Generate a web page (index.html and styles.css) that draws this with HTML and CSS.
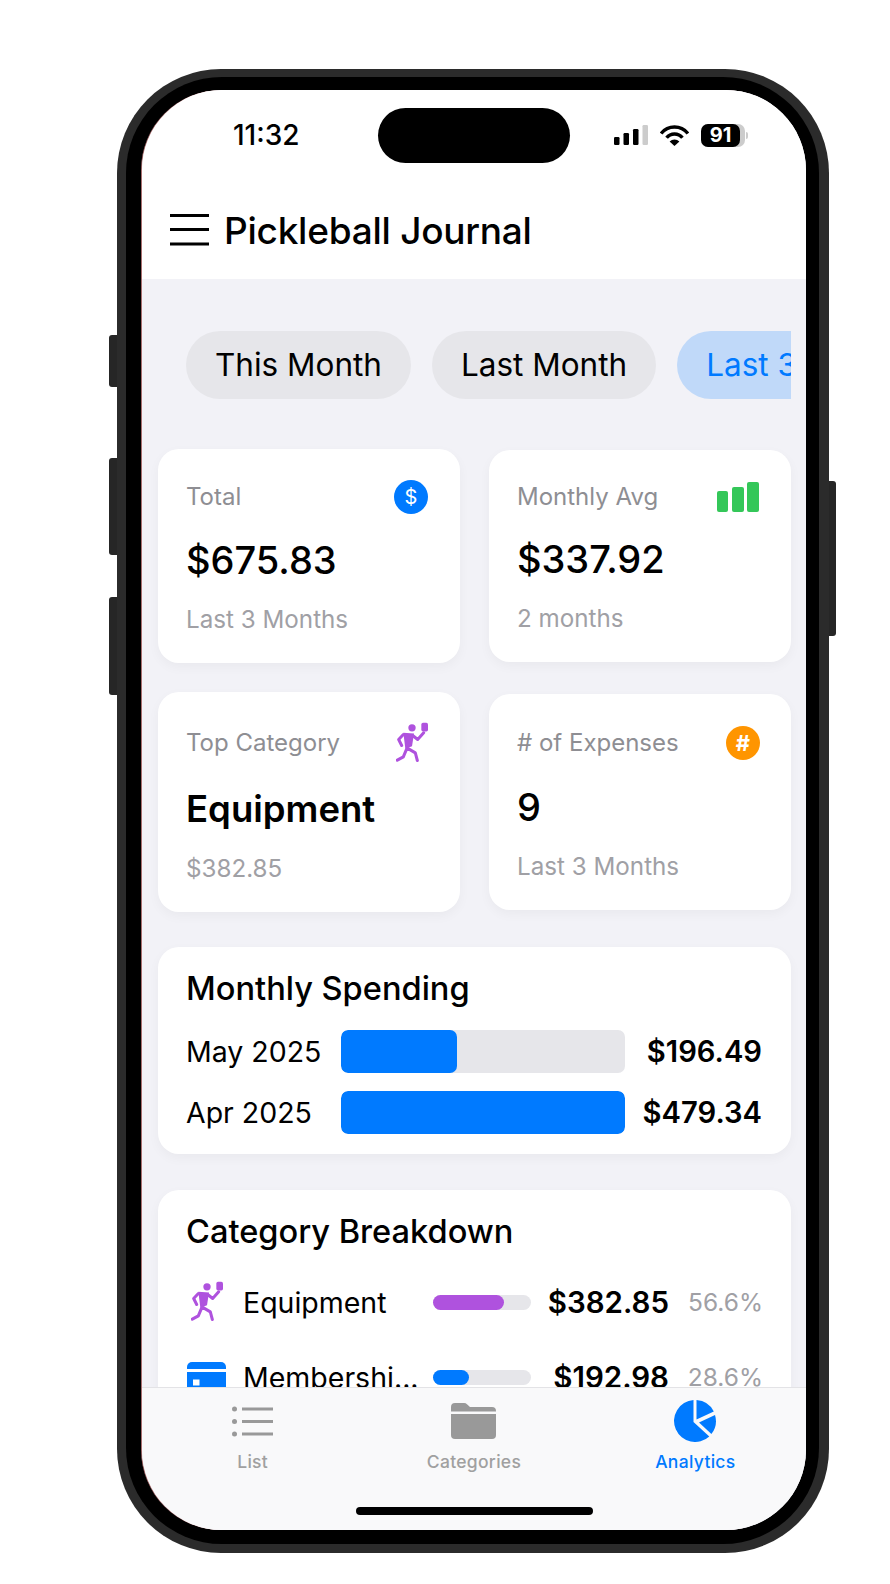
FILE: index.html
```html
<!DOCTYPE html>
<html lang="en">
<head>
  <meta charset="UTF-8">
  <meta name="viewport" content="width=device-width, initial-scale=1.0">
  <title>Pickleball Journal</title>
  <link rel="stylesheet" href="styles.css">
</head>
<body>

  <div id="phone">
    <span class="side-btn side-btn-mute"></span>
    <span class="side-btn side-btn-up"></span>
    <span class="side-btn side-btn-down"></span>
    <span class="side-btn side-btn-power"></span>

    <div id="bezel">
      <div id="screen">
        <div id="island"></div>

        <header id="top">
          <div id="status-bar">
            <span class="time">11:32</span>
            <div class="status-icons">
              <svg width="34" height="20" viewBox="0 0 34 20">
                <rect x="0" y="12" width="5.5" height="8" rx="1.2" fill="#000"/>
                <rect x="9.5" y="8" width="5.5" height="12" rx="1.2" fill="#000"/>
                <rect x="19" y="4" width="5.5" height="16" rx="1.2" fill="#000"/>
                <rect x="28.5" y="0" width="5.5" height="20" rx="1.2" fill="#ccc"/>
              </svg>
              <svg width="29" height="22" viewBox="0 0 29 22">
                <path d="M1.1 9.5A17 17 0 0 1 27.9 9.5" fill="none" stroke="#000" stroke-width="3.4"/>
                <path d="M6.6 13.8A10 10 0 0 1 22.4 13.8" fill="none" stroke="#000" stroke-width="3.4"/>
                <path d="M14.5 22L9.6 17.4A7 7 0 0 1 19.4 17.4Z" fill="#000"/>
              </svg>
              <div class="battery">
                <span class="battery-fill">91</span>
              </div>
            </div>
          </div>
          <div id="title-row">
            <svg width="39" height="32" viewBox="0 0 39 32">
              <path d="M0 1.5H39M0 15.5H39M0 30H39" stroke="#000" stroke-width="3"/>
            </svg>
            <h1>Pickleball Journal</h1>
          </div>
        </header>

        <main id="content">
          <div class="pills">
            <span class="pill">This Month</span>
            <span class="pill">Last Month</span>
            <span class="pill pill-active">Last 3 Months</span>
          </div>

          <div class="stats">
            <div class="card">
              <div class="card-head">
                <span class="card-label">Total</span>
                <span class="coin coin-blue">$</span>
              </div>
              <div class="card-value">$675.83</div>
              <div class="card-sub">Last 3 Months</div>
            </div>
            <div class="card">
              <div class="card-head card-head-bars">
                <span class="card-label">Monthly Avg</span>
                <svg class="bars-icon" width="42" height="30" viewBox="0 0 42 30">
                  <rect x="0" y="9" width="11" height="21" rx="2" fill="#34c759"/>
                  <rect x="15" y="5" width="12" height="25" rx="2" fill="#34c759"/>
                  <rect x="30" y="0" width="12" height="30" rx="2" fill="#34c759"/>
                </svg>
              </div>
              <div class="card-value">$337.92</div>
              <div class="card-sub">2 months</div>
            </div>
            <div class="card">
              <div class="card-head">
                <span class="card-label">Top Category</span>
                <svg class="runner" viewBox="30 20 105 125">
                  <circle cx="78" cy="37" r="11" fill="#af52de"/>
                  <rect x="106" y="22" width="20" height="26" rx="5" fill="#af52de"/>
                  <path d="M52 52L84 54L78 92L58 100Z" fill="#af52de"/>
                  <path d="M52 57L38 72L47 90M80 60L95 72L113 52M64 98L88 112L94 135M62 100L52 124L34 134" fill="none" stroke="#af52de" stroke-width="9" stroke-linecap="round" stroke-linejoin="round"/>
                </svg>
              </div>
              <div class="card-value card-value-big">Equipment</div>
              <div class="card-sub">$382.85</div>
            </div>
            <div class="card">
              <div class="card-head">
                <span class="card-label"># of Expenses</span>
                <span class="coin coin-orange">#</span>
              </div>
              <div class="card-value">9</div>
              <div class="card-sub">Last 3 Months</div>
            </div>
          </div>

          <section class="panel panel-monthly">
            <h2>Monthly Spending</h2>
            <div class="month-rows">
              <div class="month-row">
                <span class="month-name">May 2025</span>
                <div class="month-bar"><div class="month-fill" style="width: 41%"></div></div>
                <span class="month-amount">$196.49</span>
              </div>
              <div class="month-row">
                <span class="month-name">Apr 2025</span>
                <div class="month-bar"><div class="month-fill" style="width: 100%"></div></div>
                <span class="month-amount">$479.34</span>
              </div>
            </div>
          </section>

          <section class="panel panel-category">
            <h2>Category Breakdown</h2>
            <div class="cat-rows">
              <div class="cat-row">
                <span class="cat-icon">
                  <svg class="runner" viewBox="30 20 105 125">
                    <circle cx="78" cy="37" r="11" fill="#af52de"/>
                    <rect x="106" y="22" width="20" height="26" rx="5" fill="#af52de"/>
                    <path d="M52 52L84 54L78 92L58 100Z" fill="#af52de"/>
                    <path d="M52 57L38 72L47 90M80 60L95 72L113 52M64 98L88 112L94 135M62 100L52 124L34 134" fill="none" stroke="#af52de" stroke-width="9" stroke-linecap="round" stroke-linejoin="round"/>
                  </svg>
                </span>
                <span class="cat-name">Equipment</span>
                <div class="cat-bar"><div class="cat-fill cat-fill-purple" style="width: 72%"></div></div>
                <span class="cat-amount">$382.85</span>
                <span class="cat-pct">56.6%</span>
              </div>
              <div class="cat-row">
                <span class="cat-icon">
                  <svg width="39" height="30" viewBox="0 0 39 30">
                    <path d="M0 7V5a5 5 0 0 1 5-5H34a5 5 0 0 1 5 5V7Z" fill="#007aff"/>
                    <path d="M0 10H39V25a5 5 0 0 1-5 5H5a5 5 0 0 1-5-5Z" fill="#007aff"/>
                    <rect x="6" y="17.5" width="6.5" height="6" fill="#fff"/>
                  </svg>
                </span>
                <span class="cat-name">Membershi...</span>
                <div class="cat-bar"><div class="cat-fill" style="width: 37%"></div></div>
                <span class="cat-amount">$192.98</span>
                <span class="cat-pct">28.6%</span>
              </div>
            </div>
          </section>
        </main>

        <nav id="tabs">
          <div class="tab">
            <span class="tab-icon">
              <svg width="41" height="31" viewBox="0 0 41 31">
                <circle cx="2.5" cy="3" r="2.5" fill="#999"/>
                <circle cx="2.5" cy="15.5" r="2.5" fill="#999"/>
                <circle cx="2.5" cy="28" r="2.5" fill="#999"/>
                <path d="M10 3H41M10 15.5H41M10 28H41" stroke="#999" stroke-width="3"/>
              </svg>
            </span>
            <span class="tab-label">List</span>
          </div>
          <div class="tab">
            <span class="tab-icon">
              <svg width="45" height="36" viewBox="0 0 45 36">
                <path d="M0 8.5V4a4 4 0 0 1 4-4H13a4 4 0 0 1 3 1.3L19 4H41a4 4 0 0 1 4 4V8.5Z" fill="#999"/>
                <path d="M0 11H45V32a4 4 0 0 1-4 4H4a4 4 0 0 1-4-4Z" fill="#999"/>
              </svg>
            </span>
            <span class="tab-label">Categories</span>
          </div>
          <div class="tab tab-active">
            <span class="tab-icon">
              <svg width="42" height="42" viewBox="0 0 42 42">
                <path d="M19.5 0.05A21 21 0 1 0 35.3 36.4L19.5 22Z" fill="#007aff"/>
                <path d="M22.5 0.05A21 21 0 0 1 39.8 11.5L22.5 19.5Z" fill="#007aff"/>
                <path d="M41 15A21 21 0 0 1 37.4 34L25 22.5Z" fill="#007aff"/>
              </svg>
            </span>
            <span class="tab-label">Analytics</span>
          </div>
          <span id="home-bar"></span>
        </nav>
      </div>
    </div>
  </div>

</body>
</html>
```

FILE: styles.css
```css
:root {
  --blue: #007aff;
  --grey-text: #8e8e93;
  --light-text: #a0a0a5;
  --track: #e6e6ea;
  --frame: #2b2b2b;
}

body {
  font-family: 'Inter', 'Liberation Sans', sans-serif;
  margin: 0;
  padding: 69px 0 0 117px;
  background: #fff;
  color: #000;
}

#phone {
  position: relative;
  width: 712px;
  height: 1484px;
  box-sizing: border-box;
  padding: 8px 10px 9px 9px;
  background: var(--frame);
  border-radius: 104px;
}

.side-btn {
  position: absolute;
  left: -8px;
  width: 8px;
  background: #262626;
  border-radius: 3px 0 0 3px;
}

.side-btn-mute { top: 266px; height: 52px; }
.side-btn-up { top: 389px; height: 97px; }
.side-btn-down { top: 528px; height: 98px; }

.side-btn-power {
  left: auto;
  right: -7px;
  top: 412px;
  width: 7px;
  height: 155px;
  border-radius: 0 3px 3px 0;
}

#bezel {
  height: 100%;
  box-sizing: border-box;
  padding: 13px 13px 14px 16px;
  background: #000;
  border-radius: 96px;
}

#screen {
  position: relative;
  height: 100%;
  display: flex;
  flex-direction: column;
  overflow: hidden;
  background: #f2f2f7;
  border-radius: 80px;
  box-shadow: -1px 0 0 #a86f6f;
}

#island {
  position: absolute;
  top: 18px;
  left: 236px;
  width: 192px;
  height: 55px;
  background: #000;
  border-radius: 28px;
}

#top {
  flex: 0 0 189px;
  background: #fff;
}

#status-bar {
  height: 90px;
  box-sizing: border-box;
  padding: 0 61px 0 91px;
  display: flex;
  justify-content: space-between;
  align-items: center;
}

.time {
  font-size: 28px;
  font-weight: 500;
}

.status-icons {
  display: flex;
  align-items: center;
  gap: 12px;
}

.battery {
  position: relative;
  width: 44px;
  height: 23px;
  background: #ccc;
  border-radius: 7px;
}

.battery::after {
  content: "";
  position: absolute;
  right: -3px;
  top: 8px;
  width: 2px;
  height: 7px;
  background: #ccc;
  border-radius: 0 2px 2px 0;
}

.battery-fill {
  display: block;
  width: 39px;
  height: 23px;
  line-height: 23px;
  text-align: center;
  background: #000;
  border-radius: 7px;
  color: #fff;
  font-size: 20px;
  font-weight: 700;
}

#title-row {
  height: 99px;
  box-sizing: border-box;
  padding-left: 28px;
  display: flex;
  align-items: center;
  gap: 15px;
}

h1 {
  margin: 2px 0 0;
  font-size: 37px;
  font-weight: 500;
  letter-spacing: -0.25px;
}

#content {
  flex: 1;
  min-height: 0;
  overflow: hidden;
  padding: 52px 15px 0 16px;
}

.pills {
  display: flex;
  gap: 21px;
  margin-left: 28px;
  overflow: hidden;
}

.pill {
  flex: 0 0 auto;
  height: 68px;
  line-height: 68px;
  padding: 0 29px;
  background: var(--track);
  border-radius: 34px;
  font-size: 31.5px;
}

.pill-active {
  background: #c0d9f9;
  color: var(--blue);
}

.stats {
  display: grid;
  grid-template-columns: 1fr 1fr;
  gap: 29px;
  align-items: center;
  margin-top: 50px;
}

.card, .panel {
  background: #fff;
  border-radius: 21px;
  box-shadow: 0 4px 12px rgba(0, 0, 0, 0.04);
}

.card {
  padding: 29px 29px 29px 28px;
}

.card-head {
  display: flex;
  justify-content: space-between;
  align-items: center;
}

.card-head-bars {
  height: 36px;
}

.bars-icon {
  margin-right: 3px;
}

.card-label {
  font-size: 24px;
  line-height: 36px;
  color: var(--grey-text);
}

.coin {
  width: 34px;
  height: 34px;
  margin: 2px 2px 2px 0;
  line-height: 34px;
  text-align: center;
  border-radius: 50%;
  color: #fff;
  font-size: 20px;
}

.coin-blue { background: var(--blue); margin-right: 3px; }
.coin-orange { background: #ff9500; font-weight: 700; font-size: 22px; margin-top: 3px; margin-bottom: 3px; margin-right: 2px; }

.runner {
  display: block;
  width: 35px;
  height: 42px;
}

.card-head .runner {
  margin: 1px 0;
}

.card-value {
  margin-top: 22px;
  font-size: 38px;
  line-height: 44px;
  font-weight: 500;
}

.card-value-big {
  font-size: 36.5px;
  font-weight: 600;
}

.card-sub {
  margin-top: 24px;
  font-size: 24.2px;
  line-height: 28px;
  color: var(--light-text);
}

.panel {
  margin-top: 35px;
  padding: 21px 29px 20px 28px;
}

h2 {
  margin: 0;
  font-size: 32.6px;
  line-height: 40px;
  font-weight: 500;
}

.month-rows {
  display: flex;
  flex-direction: column;
  gap: 18px;
  margin-top: 22px;
}

.month-row {
  display: flex;
  align-items: center;
  font-size: 28.5px;
}

.month-name {
  flex: 0 0 155px;
}

.month-bar {
  flex: 1;
  height: 43px;
  background: var(--track);
  border-radius: 7px;
  overflow: hidden;
}

.month-fill {
  height: 100%;
  background: var(--blue);
  border-radius: 7px;
}

.month-amount {
  flex: 0 0 137px;
  text-align: right;
  font-size: 29.2px;
  font-weight: 600;
}

.panel-category {
  margin-top: 36px;
}

.cat-rows {
  display: flex;
  flex-direction: column;
  gap: 35px;
  margin-top: 31px;
}

.cat-row {
  display: flex;
  align-items: center;
  height: 40px;
  font-size: 28.5px;
}

.cat-icon {
  flex: 0 0 40px;
  display: flex;
  justify-content: center;
}

.cat-icon .runner {
  margin-left: 4px;
}

.cat-name {
  flex: 0 0 175px;
  width: 175px;
  margin: 0 15px 0 17px;
  white-space: nowrap;
}

.cat-bar {
  flex: 0 0 98px;
  height: 15px;
  background: var(--track);
  border-radius: 8px;
}

.cat-fill {
  height: 100%;
  background: var(--blue);
  border-radius: 8px;
}

.cat-fill-purple {
  background: #af52de;
}

.cat-amount {
  flex: 1;
  text-align: right;
  font-size: 29.5px;
  font-weight: 600;
}

.cat-pct {
  flex: 0 0 94px;
  margin-right: -1px;
  text-align: right;
  font-size: 24.5px;
  color: var(--light-text);
}

#tabs {
  position: relative;
  flex: 0 0 143px;
  box-sizing: border-box;
  display: grid;
  grid-template-columns: repeat(3, 1fr);
  padding-top: 11px;
  background: #f9f9fa;
  border-top: 1px solid #e3e3e6;
}

.tab {
  display: flex;
  flex-direction: column;
  align-items: center;
  color: #a0a0a0;
}

.tab-icon {
  height: 44px;
  display: flex;
  align-items: center;
}

.tab-label {
  margin-top: 8px;
  font-size: 17.5px;
  letter-spacing: 0.3px;
  line-height: 22px;
  font-weight: 500;
}

.tab-active {
  color: var(--blue);
}

#home-bar {
  position: absolute;
  left: 214px;
  bottom: 15px;
  width: 237px;
  height: 8px;
  background: #000;
  border-radius: 4px;
}
```
